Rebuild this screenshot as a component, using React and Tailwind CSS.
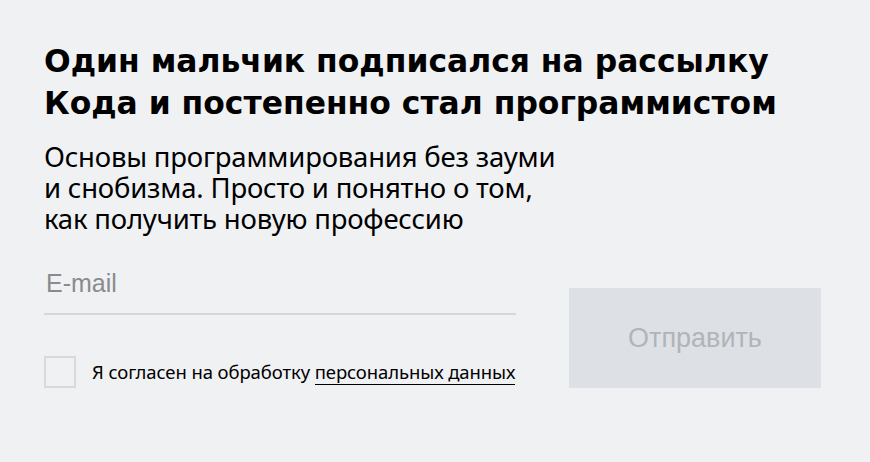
export default function App() {
  return (
    <div className="w-[870px] h-[462px] bg-[#f0f1f3] pt-[41px] pl-[44px] pr-[49px] font-['Noto_Sans',sans-serif] text-black">
      <h2 className="font-['DejaVu_Sans',sans-serif] font-bold text-[31.4px] leading-[41.5px]">
        Один мальчик подписался на рассылку
        <br />
        Кода и постепенно стал программистом
      </h2>
      <p className="mt-[17px] text-[27.5px] leading-[31px] tracking-[-0.2px]">
        Основы программирования без зауми
        <br />
        и снобизма. Просто и понятно о том,
        <br />
        как получить новую профессию
      </p>
      <div className="mt-[34px] flex items-end justify-between">
        <div className="w-[472px]">
          <div className="border-b-2 border-[#d6d7d9] pb-[15px] pl-[2px] font-['Liberation_Sans',Arial,sans-serif] text-[25px] leading-[30px] text-[#8a8b8d]">
            E-mail
          </div>
          <label className="mt-[41px] flex items-center">
            <span className="w-[32px] h-[32px] border-2 border-[#d8d9db] shrink-0" />
            <span className="ml-[16px] text-[18.5px] leading-[24px] tracking-[-0.1px]">
              Я согласен на обработку{" "}
              <span className="border-b border-black">персональных данных</span>
            </span>
          </label>
        </div>
        <button className="w-[252px] h-[100px] bg-[#dde1e5] text-[#b1b4b8] font-['Liberation_Sans',Arial,sans-serif] text-[27px]">
          Отправить
        </button>
      </div>
    </div>
  );
}
